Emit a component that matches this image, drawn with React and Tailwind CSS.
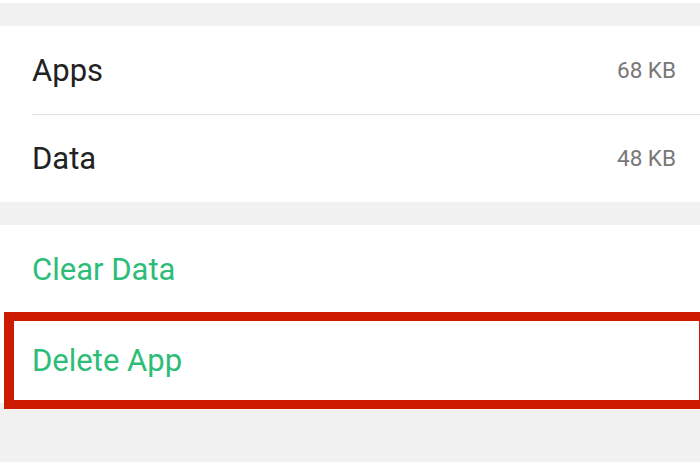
const STORAGE = [
  { label: 'Apps', size: '68 KB' },
  { label: 'Data', size: '48 KB' },
]

export default function App() {
  return (
    <div className="w-[700px] h-[465px] bg-white overflow-hidden font-['Roboto',sans-serif]">
      <div className="mt-[3px] h-[23px] bg-[#f1f1f1]" />

      {/* Storage usage */}
      <div className="bg-white">
        {STORAGE.map(({ label, size }, i) => (
          <div key={label} className="pl-8">
            {i > 0 && <div className="h-px bg-[#e0e0e0]" />}
            <div className={`flex items-center justify-between pr-6 ${i > 0 ? 'h-[87px]' : 'h-[88px]'}`}>
              <span className="text-[31px] text-[#222222] leading-none">{label}</span>
              <span className="text-[22.5px] text-[#777777] leading-none">{size}</span>
            </div>
          </div>
        ))}
      </div>

      <div className="h-[23px] bg-[#f1f1f1]" />

      {/* Actions */}
      <div className="bg-white">
        <div className="h-[88px] flex items-center pl-8">
          <span className="text-[31px] text-[#2ebd79] leading-none">Clear Data</span>
        </div>
        <div className="relative h-[90px] flex items-center pl-8">
          <span className="text-[31px] text-[#2ebd79] leading-none mt-[4px]">Delete App</span>
          <div className="absolute left-[4px] -right-[8px] -top-[1px] -bottom-[6px] border-[9px] border-l-[10px] border-[#cc1b00]" />
        </div>
      </div>

      <div className="h-[59px] bg-[#f1f1f1]" />
    </div>
  )
}
